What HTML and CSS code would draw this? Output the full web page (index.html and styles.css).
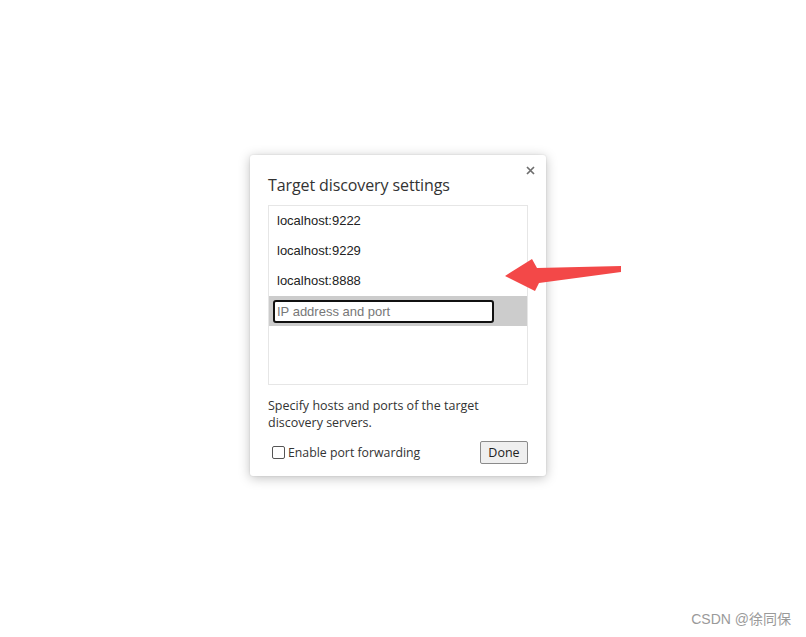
FILE: index.html
```html
<!DOCTYPE html>
<html lang="en">
<head>
  <meta charset="UTF-8">
  <title>Target discovery settings</title>
  <link rel="stylesheet" href="styles.css">
</head>
<body>
  <div class="stage">
    <div class="dialog">
      <button class="close" aria-label="Close">
        <svg width="9" height="9" viewBox="0 0 9 9"><path d="M1 1L8 8M8 1L1 8" stroke="#6e6e6e" stroke-width="1.7"/></svg>
      </button>
      <h1>Target discovery settings</h1>
      <div class="list">
        <div class="item">localhost:9222</div>
        <div class="item">localhost:9229</div>
        <div class="item">localhost:8888</div>
        <div class="item editing">
          <input type="text" placeholder="IP address and port">
        </div>
      </div>
      <p class="hint">Specify hosts and ports of the target discovery servers.</p>
      <div class="footer">
        <label class="check"><span class="box"></span>Enable port forwarding</label>
        <button class="done">Done</button>
      </div>
    </div>

    <!-- annotation arrow -->
    <svg class="arrow" width="130" height="40" viewBox="500 255 130 40">
      <path d="M505 276 L532 259 L537 268 L621 266 L621 272 L539 283 L535 291 Z" fill="#f34848"/>
    </svg>
  </div>

  <div class="mark">CSDN @徐同保</div>
</body>
</html>
```

FILE: styles.css
```css
body {
  margin: 0;
  background: #fff;
  font-family: "Open Sans", "Noto Sans", sans-serif;
  color: #333;
}
.stage {
  position: relative;
  padding: 155px 0 0 250px;
  height: 482px;
}
.dialog {
  position: relative;
  width: 296px;
  height: 321px;
  box-sizing: border-box;
  padding: 0 18px;
  background: #fff;
  border-radius: 3px;
  box-shadow: 0 2px 12px rgba(0,0,0,0.25), 0 0 2px rgba(0,0,0,0.12);
}
.close {
  position: absolute;
  top: 8px;
  right: 8px;
  width: 15px;
  height: 15px;
  padding: 3px;
  border: none;
  background: none;
  display: flex;
}
h1 {
  margin: 0;
  padding-top: 19px;
  height: 31px;
  font-size: 16px;
  font-weight: 400;
  line-height: 22px;
  color: #333;
  letter-spacing: -0.1px;
}
.list {
  width: 260px;
  height: 180px;
  box-sizing: border-box;
  border: 1px solid #e6e6e6;
  font-family: "Liberation Sans", Arial, sans-serif;
  font-size: 13px;
  color: #222;
}
.item {
  height: 30px;
  line-height: 30px;
  padding-left: 8px;
}
.item.editing {
  background: #cccccc;
  padding-left: 4px;
  display: flex;
  align-items: center;
}
.item input {
  width: 221px;
  height: 23px;
  box-sizing: border-box;
  border: 2px solid #111;
  border-radius: 3px;
  padding: 0 2px;
  outline: none;
  background: #fff;
  font-family: "Liberation Sans", Arial, sans-serif;
  font-size: 13px;
  color: #222;
}
.item input::placeholder {
  color: #777;
}
.hint {
  margin: 12px 0 0;
  width: 230px;
  font-size: 12.5px;
  line-height: 17px;
  color: #333;
}
.footer {
  display: flex;
  justify-content: space-between;
  align-items: center;
  margin-top: 10px;
  padding-left: 4px;
}
.check {
  display: flex;
  align-items: center;
  font-size: 12.3px;
  color: #333;
}
.box {
  width: 11px;
  height: 11px;
  border: 1px solid #555;
  border-radius: 2px;
  margin-right: 3px;
}
.done {
  width: 48px;
  height: 23px;
  padding: 0;
  border: 1px solid #8a8a8a;
  border-radius: 2px;
  background: #efefef;
  font-family: "Open Sans", "Noto Sans", sans-serif;
  font-size: 12.5px;
  color: #222;
}
.arrow {
  position: absolute;
  left: 500px;
  top: 255px;
}
.mark {
  position: absolute;
  right: 15px;
  bottom: 9px;
  font-family: "Liberation Sans", "Noto Sans CJK SC", sans-serif;
  font-size: 14px;
  color: #9a9a9a;
}
```
